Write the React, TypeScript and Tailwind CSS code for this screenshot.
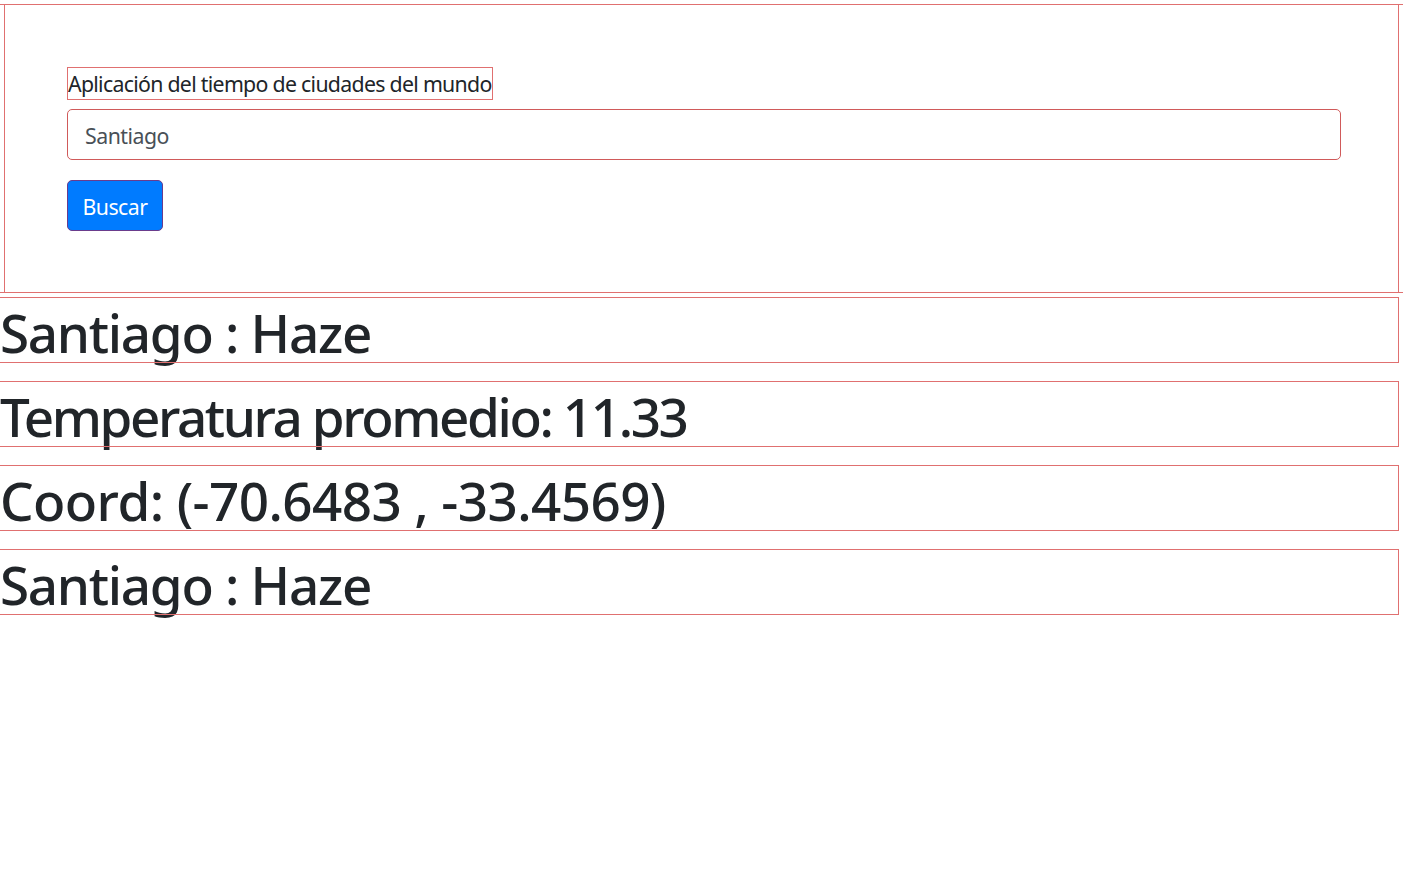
import React from "react";

const F = { fontFamily: '"Noto Sans", "Open Sans", sans-serif' };

export default function App() {
  const rows = [
    { t: "Santiago : Haze", c: "tracking-[-1.3px]" },
    { t: "Temperatura promedio: 11.33", c: "tracking-[-2.4px]" },
    { t: "Coord: (-70.6483 , -33.4569)", c: "tracking-[-0.6px]" },
    { t: "Santiago : Haze", c: "tracking-[-1.3px]" },
  ];
  return (
    <div className="w-[1403px] min-h-[870px] bg-white text-[#212529]" style={F}>
      <div className="pt-[4px]">
        <div className="border-y border-[#e07070]">
          <div className="mx-[4px] w-[1395px] border-x border-[#e07070] pl-[62px] pr-[57px] pt-[62px] pb-[61px]">
            <div className="flex">
              <div className="outline outline-1 -outline-offset-1 outline-[#e07070] text-[21.3px] leading-[33px] h-[33px] pl-[1px] pr-[1px] tracking-[-0.7px]">
                Aplicación del tiempo de ciudades del mundo
              </div>
            </div>
            <div className="mt-[9px] h-[51px] border border-[#d05a5a] rounded-[5px] flex items-center px-[17px] pt-[3px] text-[21.3px] text-[#495057] tracking-[-0.5px]">
              Santiago
            </div>
            <div className="mt-[20px]">
              <button className="w-[96px] h-[51px] rounded-[5px] bg-[#007bff] border border-[#6a3c8c] pt-[3px] text-white text-[21.3px] tracking-[-0.5px]">
                Buscar
              </button>
            </div>
          </div>
        </div>
      </div>
      <div className="pt-[5px] flex flex-col gap-[20px]">
        {rows.map((r, i) => (
          <div
            key={i}
            className={
              "w-[1398px] h-[64px] outline outline-1 outline-[#e07070] text-[53px] leading-[70px] font-medium whitespace-nowrap " +
              r.c
            }
          >
            {r.t}
          </div>
        ))}
      </div>
    </div>
  );
}
